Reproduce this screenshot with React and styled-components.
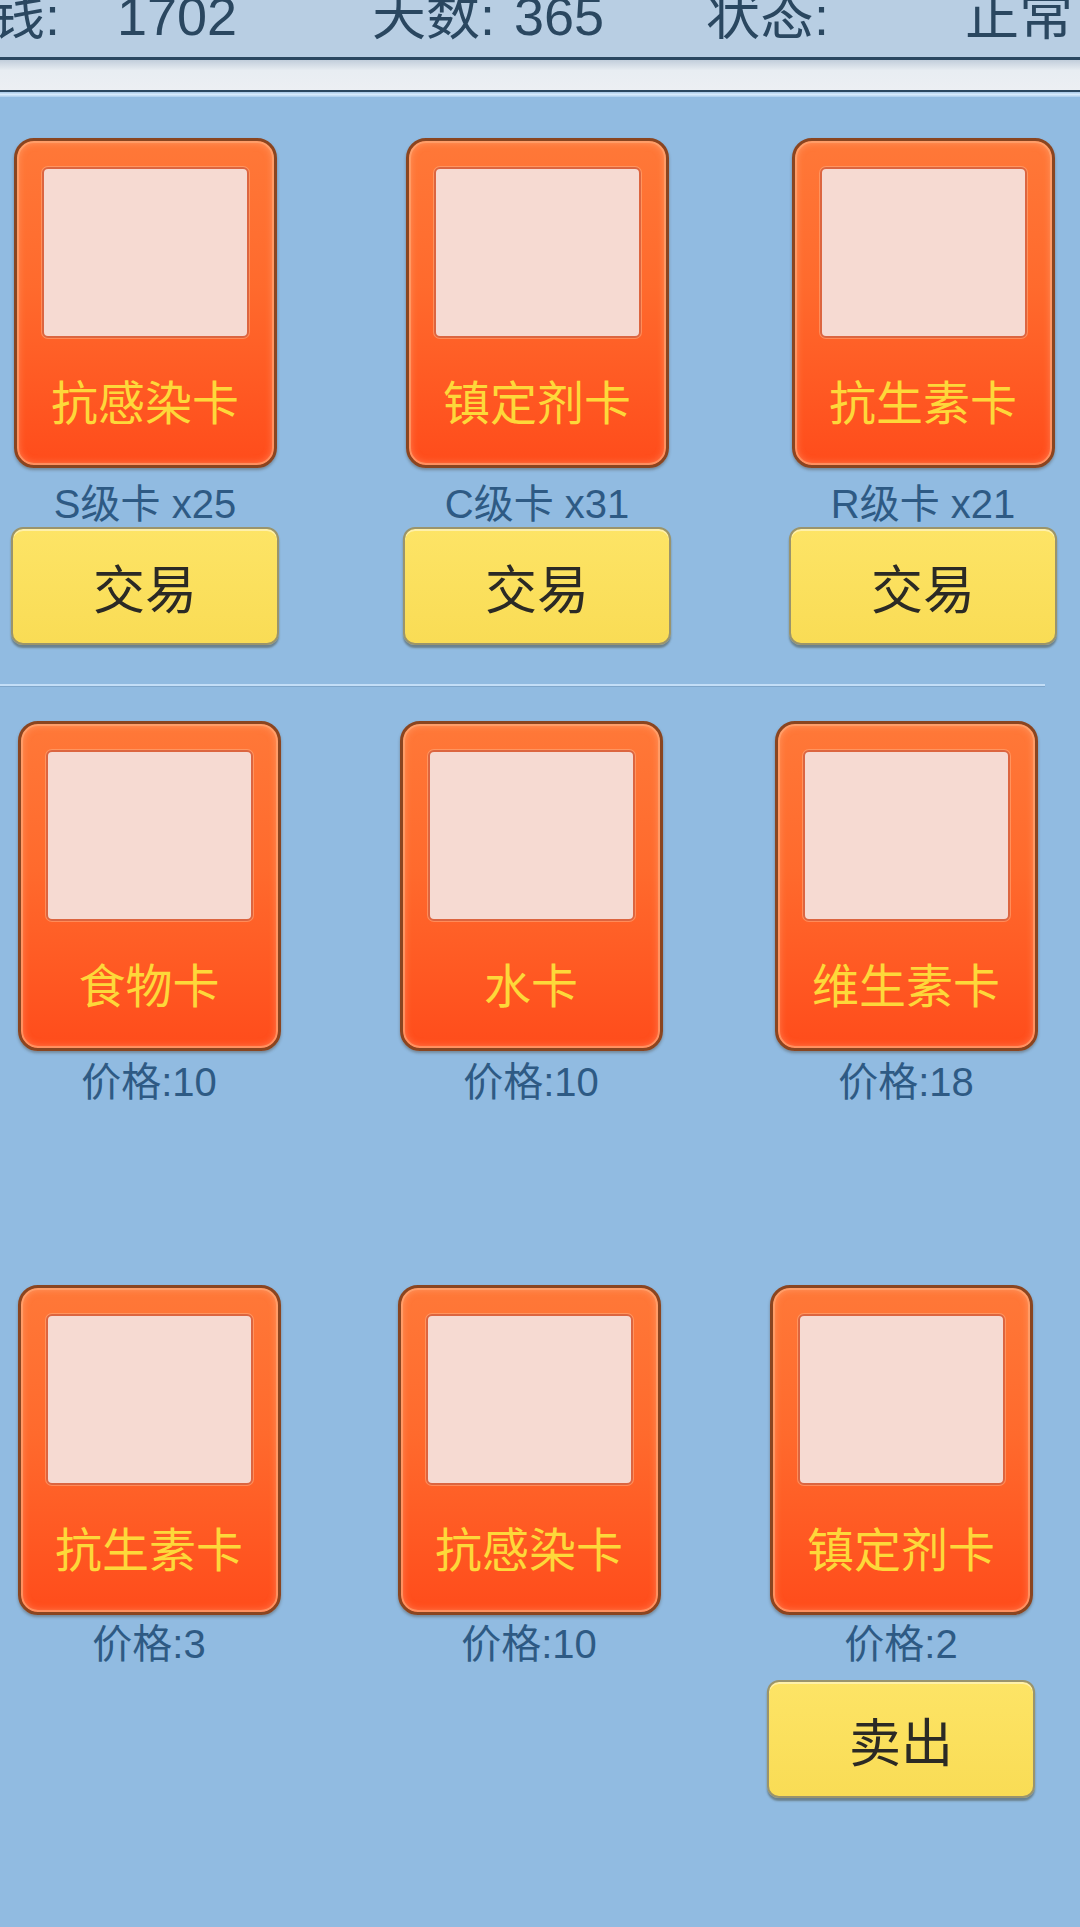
import React from "react";
import styled, { createGlobalStyle } from "styled-components";

const Global = createGlobalStyle`
  html, body { margin: 0; padding: 0; }
  body {
    background: #91bbe1;
    font-family: "Liberation Sans", "Noto Sans CJK SC", sans-serif;
  }
`;

const Page = styled.div`
  width: 1080px;
  min-height: 1927px;
  background: #91bbe1;
  overflow: hidden;
`;

const StatusBar = styled.div`
  height: 57px;
  background: #b8cee3;
  border-bottom: 3px solid #2a4760;
  overflow: hidden;
`;

const StatusRow = styled.div`
  display: flex;
  margin-left: -9px;
  margin-top: -11px;
`;

const StatusCell = styled.div`
  flex: none;
  width: ${(p) => (p.$w ? `${p.$w}px` : "auto")};
  font-size: 54px;
  line-height: 54px;
  color: #2a4760;
  white-space: pre;
`;

const Band = styled.div`
  height: 30px;
  background: linear-gradient(#c2cedb, #e8edf2 35%, #eceff3);
  border-bottom: 2px solid #2a4760;
`;

const BandGlow = styled.div`
  height: 5px;
  background: linear-gradient(#a6c7e6, #d6eafc 50%, #a9cbeb);
`;

const Section = styled.div`
  padding: ${(p) => p.$pt}px 0 ${(p) => p.$pb}px;
`;

const CardRow = styled.div`
  display: grid;
  grid-template-columns: ${(p) => p.$cols};
  padding-left: ${(p) => p.$pl}px;
  margin-top: ${(p) => p.$mt || 0}px;
  align-items: start;
  justify-items: start;
`;

const Slot = styled.div`
  width: 268px;
  display: flex;
  flex-direction: column;
  align-items: center;
`;

const Card = styled.div`
  width: 263px;
  height: 330px;
  box-sizing: border-box;
  border: 3px solid #8a4520;
  border-radius: 20px;
  background: linear-gradient(#ff7838, #ff6a2d 45%, #ff4c1b);
  box-shadow: inset 0 0 0 2px rgba(255, 170, 120, 0.6),
    inset 0 0 9px rgba(255, 205, 170, 0.55), 0 2px 3px rgba(60, 40, 20, 0.35);
  display: flex;
  flex-direction: column;
  align-items: center;
  padding-top: 26px;
`;

const Art = styled.div`
  width: 207px;
  height: 171px;
  box-sizing: border-box;
  background: #f6dad2;
  border: 2px solid #dc6540;
  border-radius: 6px;
  box-shadow: 0 0 0 1px rgba(255, 175, 130, 0.55);
`;

const CardName = styled.div`
  flex: 1;
  display: flex;
  align-items: center;
  justify-content: center;
  font-size: 47px;
  color: #fdd83a;
  padding-bottom: 5px;
`;

const Caption = styled.div`
  margin-top: ${(p) => p.$mt}px;
  font-size: 40px;
  line-height: 44px;
  color: #2e5a84;
  white-space: pre;
`;

const ActionButton = styled.button`
  width: 268px;
  height: 118px;
  margin-top: ${(p) => p.$mt}px;
  box-sizing: border-box;
  border: 2px solid #9a946c;
  border-radius: 12px;
  background: linear-gradient(#fde466, #f9dc55);
  box-shadow: 0 3px 2px rgba(60, 60, 40, 0.45),
    inset 0 2px 0 rgba(255, 255, 255, 0.45);
  font-family: inherit;
  font-size: 52px;
  color: #2b2a25;
  padding: 0;
`;

const Divider = styled.div`
  height: 2px;
  margin-right: 35px;
  background: #c3def7;
  box-shadow: 0 1px 0 #7ea6cb;
`;

const owned = [
  { name: "抗感染卡", tag: "S级卡 x25" },
  { name: "镇定剂卡", tag: "C级卡 x31" },
  { name: "抗生素卡", tag: "R级卡 x21" },
];

const shopA = [
  { name: "食物卡", price: 10 },
  { name: "水卡", price: 10 },
  { name: "维生素卡", price: 18 },
];

const shopB = [
  { name: "抗生素卡", price: 3 },
  { name: "抗感染卡", price: 10 },
  { name: "镇定剂卡", price: 2, sell: true },
];

function GameCard({ name }) {
  return (
    <Card>
      <Art />
      <CardName>{name}</CardName>
    </Card>
  );
}

export default function App() {
  return (
    <Page>
      <Global />
      <StatusBar>
        <StatusRow>
          <StatusCell $w={126}>钱:</StatusCell>
          <StatusCell $w={255}>1702</StatusCell>
          <StatusCell $w={142}>天数:</StatusCell>
          <StatusCell $w={192}>365</StatusCell>
          <StatusCell $w={259}>状态:</StatusCell>
          <StatusCell>正常</StatusCell>
        </StatusRow>
      </StatusBar>
      <Band />
      <BandGlow />

      <Section $pt={41} $pb={39}>
        <CardRow $pl={11} $cols="392px 386px 268px">
          {owned.map((c) => (
            <Slot key={c.name}>
              <GameCard name={c.name} />
              <Caption $mt={14}>{c.tag}</Caption>
              <ActionButton $mt={1}>交易</ActionButton>
            </Slot>
          ))}
        </CardRow>
      </Section>

      <Divider />

      <Section $pt={35} $pb={40}>
        <CardRow $pl={15} $cols="382px 375px 268px">
          {shopA.map((c) => (
            <Slot key={c.name}>
              <GameCard name={c.name} />
              <Caption $mt={9}>价格:{c.price}</Caption>
            </Slot>
          ))}
        </CardRow>
        <CardRow $pl={15} $cols="380px 372px 268px" $mt={181}>
          {shopB.map((c) => (
            <Slot key={c.name}>
              <GameCard name={c.name} />
              <Caption $mt={7}>价格:{c.price}</Caption>
              {c.sell && <ActionButton $mt={14}>卖出</ActionButton>}
            </Slot>
          ))}
        </CardRow>
      </Section>
    </Page>
  );
}
